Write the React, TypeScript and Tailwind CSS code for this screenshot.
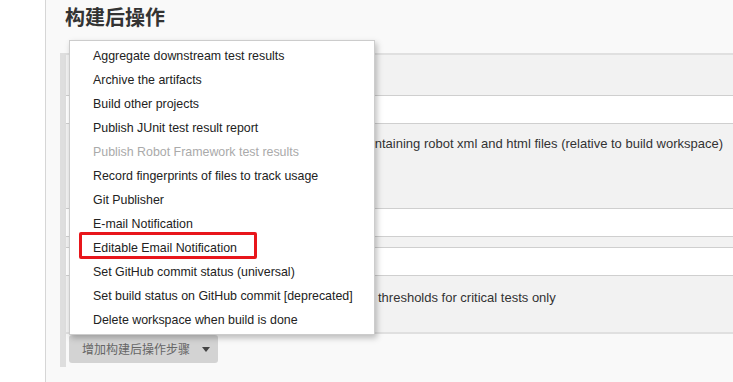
import React from 'react';

const MENU_ITEMS: { label: string; disabled?: boolean }[] = [
    { label: 'Aggregate downstream test results' },
    { label: 'Archive the artifacts' },
    { label: 'Build other projects' },
    { label: 'Publish JUnit test result report' },
    { label: 'Publish Robot Framework test results', disabled: true },
    { label: 'Record fingerprints of files to track usage' },
    { label: 'Git Publisher' },
    { label: 'E-mail Notification' },
    { label: 'Editable Email Notification' },
    { label: 'Set GitHub commit status (universal)' },
    { label: 'Set build status on GitHub commit [deprecated]' },
    { label: 'Delete workspace when build is done' },
];

const App: React.FC = () => {
    return (
        <div
            className="relative flex w-[733px] h-[382px] overflow-hidden bg-white"
            style={{ fontFamily: '"Liberation Sans", Arial, "Noto Sans CJK SC", sans-serif' }}
        >
            {/* Left side strip */}
            <div className="w-[46px] shrink-0 bg-white border-r border-[#d6d6d6]" />

            {/* Main content */}
            <div className="flex-1 bg-[#f9f9f9] flex flex-col">
                <div className="h-[53px] pl-[19px] pt-[3px]">
                    <h1 className="text-[20px] leading-[28px] font-bold text-[#333]" style={{ fontFamily: '"Noto Sans CJK SC", sans-serif' }}>
                        构建后操作
                    </h1>
                </div>

                {/* Post-build section */}
                <div className="ml-[14px] h-[314px] flex border-l-[6px] border-[#dedede]">
                    <div className="flex-1 flex flex-col text-[13px] text-[#333]">
                        <div className="h-[42px] bg-[#f2f2f2] border-t-2 border-[#e0e0e0]" />
                        <div className="h-[29px] bg-white border-y border-[#cfcfcf]" />
                        <div className="h-[84px] bg-[#f2f2f2] pl-[295px] pt-[12px] leading-[15px]">
                            containing robot xml and html files (relative to build workspace)
                        </div>
                        <div className="h-[29px] bg-white border-y border-[#cfcfcf]" />
                        <div className="h-[10px] bg-[#f2f2f2]" />
                        <div className="h-[29px] bg-white border-y border-[#cfcfcf]" />
                        <div className="h-[58px] bg-[#f2f2f2] pl-[312px] pt-[14px] leading-[15px] border-b-2 border-[#e0e0e0]">
                            thresholds for critical tests only
                        </div>
                        <div className="pt-[1px] pl-[3px]">
                            <button className="h-[28px] w-[149px] flex items-center pl-[13px] rounded-[3px] bg-[#d3d3d3] text-[12px] text-[#666] whitespace-nowrap">
                                <span style={{ fontFamily: '"Noto Sans CJK SC", sans-serif' }}>增加构建后操作步骤</span>
                                <span className="ml-[12px] w-0 h-0 border-x-[4px] border-x-transparent border-t-[5px] border-t-[#444]" />
                            </button>
                        </div>
                    </div>
                </div>
            </div>

            {/* Dropdown menu overlay */}
            <div className="absolute left-[69px] top-[40px] w-[306px] h-[295px] bg-white border border-[#cccccc] shadow-[2px_3px_6px_rgba(0,0,0,0.25)] pt-[3px]">
                {MENU_ITEMS.map((item) => (
                    <div
                        key={item.label}
                        className={`h-[24px] flex items-center pl-[23px] text-[12.4px] ${item.disabled ? 'text-[#aaaaaa]' : 'text-[#222]'}`}
                    >
                        {item.label}
                    </div>
                ))}
                {/* Highlight annotation */}
                <div className="absolute left-[9px] top-[191px] w-[178px] h-[27px] border-[3px] border-[#e8161b] rounded-[2px]" />
            </div>
        </div>
    );
};

export default App;
